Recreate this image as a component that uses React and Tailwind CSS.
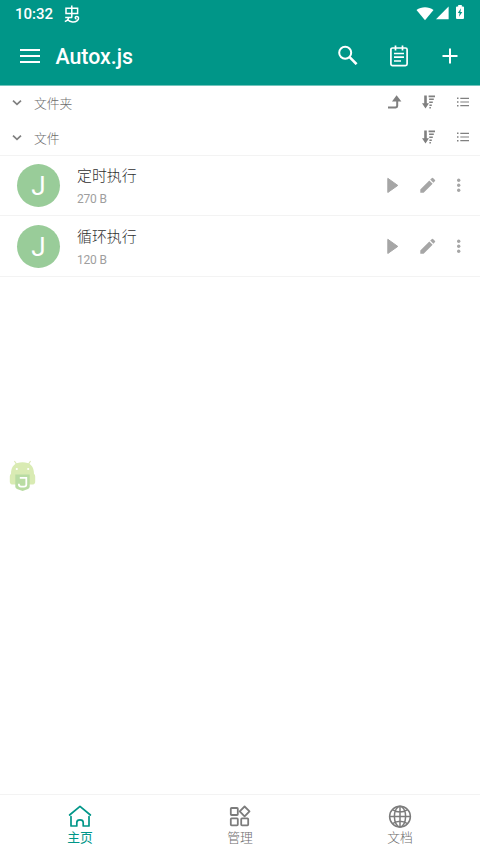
import React from "react";

const files = [
  { name: "定时执行", size: "270 B" },
  { name: "循环执行", size: "120 B" },
];

const StatusBar = () => (
  <div className="flex h-[27px] items-center pr-4 pl-[15px]">
    <span className="w-[38px] pt-0.5 text-[15px] leading-none font-medium">
      10:32
    </span>
    <svg
      className="ml-[11px]"
      width="16"
      height="18"
      viewBox="0 0 16 18"
      fill="none"
      stroke="currentColor"
      strokeWidth="1.5"
    >
      <path d="M7.8 0.5V12.4M2 3.2H13.6V8.4H2ZM1.2 12.4H8.2" />
      <path d="M4.6 12.4C4.4 14.4 3 16 0.8 16.4M3.6 14.8C6.4 17.4 10.6 17.6 13 15.8C15.6 13.8 14.6 11.4 12.8 11.4C10.8 11.4 10.6 13.8 12.6 14" />
    </svg>
    <svg
      className="ml-auto"
      width="18"
      height="14"
      viewBox="0 0 18 14"
      fill="currentColor"
    >
      <path d="M0.5 3C5.3-.8 12.7-.8 17.5 3L9 13.3Z" />
    </svg>
    <svg
      className="mb-px ml-0.5"
      width="13"
      height="14"
      viewBox="0 0 13 14"
      fill="currentColor"
    >
      <path d="M12.6 0.6V13.2H0Z" />
    </svg>
    <svg
      className="mb-[3px] ml-[7px]"
      width="8"
      height="14"
      viewBox="0 0 8 14"
      fill="currentColor"
    >
      <path d="M2.2 0H5.8V1.4H7A1 1 0 0 1 8 2.4V13A1 1 0 0 1 7 14H1A1 1 0 0 1 0 13V2.4A1 1 0 0 1 1 1.4H2.2Z" />
      <path d="M5 3.2L1.8 8H3.6L3 11.8L6.3 7H4.4Z" fill="#009688" />
    </svg>
  </div>
);

const Toolbar = () => (
  <div className="flex h-[58px] items-center pr-[22px] pl-5">
    <svg
      className="mb-px"
      width="20"
      height="16"
      viewBox="0 0 20 16"
      stroke="currentColor"
      strokeWidth="2"
    >
      <path d="M0 2H20M0 8H20M0 14H20" />
    </svg>
    <h1 className="ml-[15.5px] pt-0.5 text-[21.3px] leading-none font-medium">
      Autox.js
    </h1>
    <svg
      className="mr-8 mb-0.5 ml-auto"
      width="20"
      height="20"
      viewBox="0 0 20 20"
      fill="none"
      stroke="currentColor"
    >
      <circle cx="7.2" cy="7.8" r="6" strokeWidth="2" />
      <path d="M11.6 12.2L18.6 19.2" strokeWidth="2.6" />
    </svg>
    <svg
      className="mr-[34px] mb-px"
      width="18"
      height="22"
      viewBox="0 0 18 22"
      fill="none"
      stroke="currentColor"
      strokeWidth="1.7"
    >
      <rect x="0.9" y="3" width="16.2" height="17.6" rx="1.6" />
      <path d="M5.5 0.5V5.5M12.5 0.5V5.5M4 8.5H14M4 12.2H14M4 16H11" />
    </svg>
    <svg
      className="mb-px"
      width="16"
      height="16"
      viewBox="0 0 16 16"
      stroke="currentColor"
      strokeWidth="2"
    >
      <path d="M8 0.5V15.5M0.5 8H15.5" />
    </svg>
  </div>
);

const SortIcon = () => (
  <svg width="14" height="14" viewBox="0 0 14 14" fill="currentColor">
    <path d="M2.2 0.4H4.8V8.2H7L3.5 13.4L0 8.2H2.2Z" />
    <path d="M6.6 0.4H13V2.2H6.6ZM7.1 3.4H11.8V5.1H7.1ZM7.2 6.4H10.8V8.1H7.2ZM7.4 9.4H9.8V11H7.4ZM7.4 12.1H8.9V13.6H7.4Z" />
  </svg>
);

const ListIcon = () => (
  <svg width="12" height="10" viewBox="0 0 12 10" fill="currentColor">
    <path d="M0 0.5H1.5V2H0ZM0 4.3H1.5V5.8H0ZM0 8H1.5V9.5H0ZM3.3 0.7H12V1.9H3.3ZM3.3 4.4H12V5.6H3.3ZM3.3 8.1H12V9.3H3.3Z" />
  </svg>
);

const SectionHeader = ({ title, showUp }) => (
  <div className="flex h-[35px] items-center pr-[11px] pl-3 text-[#808080]">
    <svg
      width="10"
      height="6"
      viewBox="0 0 10 6"
      fill="none"
      stroke="currentColor"
      strokeWidth="1.7"
    >
      <path d="M1 0.6L5 4.4L9 0.6" />
    </svg>
    <span className="ml-3 pt-[3px] text-[12.8px] leading-none font-light text-[#6c6c6c]">
      {title}
    </span>
    <div className="ml-auto flex items-center pb-px">
      {showUp && (
        <svg
          className="mr-5"
          width="14"
          height="14"
          viewBox="0 0 14 14"
          fill="currentColor"
        >
          <path d="M8.6 0.2L13.4 6.4H10.2V11A2.4 2.4 0 0 1 7.8 13.4H0V11.6H7.2A1 1 0 0 0 8.2 10.6V6.4H4Z" />
        </svg>
      )}
      <SortIcon />
      <span className="w-[21px]" />
      <ListIcon />
    </div>
  </div>
);

const FileRow = ({ name, size }) => (
  <div className="flex h-[61px] items-center border-b border-[#f3f3f3] pr-[19px] pl-[17px]">
    <div className="flex h-[43px] w-[43px] items-center justify-center rounded-full bg-[#99cc99] pt-0.5 text-[26px] leading-none text-white">
      J
    </div>
    <div className="ml-[17px] pt-[3px]">
      <div className="text-[14.9px] leading-[22px] font-light text-[#303030]">
        {name}
      </div>
      <div className="mt-[3px] text-[12px] leading-[18px] tracking-[-0.2px] text-[#9e9e9e]">
        {size}
      </div>
    </div>
    <div className="ml-auto flex items-center text-[#a6a6a6]">
      <svg width="12" height="16" viewBox="0 0 12 16" fill="currentColor">
        <path
          d="M0.8 1.3L10.8 8.4L0.8 15.5Z"
          stroke="currentColor"
          strokeLinejoin="round"
        />
      </svg>
      <svg
        className="ml-[21px]"
        width="16"
        height="16"
        viewBox="0 0 16 16"
        fill="currentColor"
      >
        <path d="M0.3 12.4L9.3 3.4L12.6 6.7L3.6 15.7H0.3ZM10.2 2.6L12 0.9Q12.5 0.4 13 0.9L15 2.9Q15.5 3.4 15 3.9L13.4 5.7Z" />
      </svg>
      <svg
        className="ml-[21px]"
        width="4"
        height="14"
        viewBox="0 0 4 14"
        fill="currentColor"
      >
        <circle cx="1.7" cy="2.3" r="1.7" />
        <circle cx="1.7" cy="7.3" r="1.7" />
        <circle cx="1.7" cy="12.3" r="1.7" />
      </svg>
    </div>
  </div>
);

// Floating robot button that sits over the file list
const FloatingButton = () => (
  <svg
    className="absolute top-[460px] left-[9px]"
    width="27"
    height="32"
    viewBox="0 0 27 32"
  >
    <path
      d="M5.4 1L8 4.8M21.6 1L19 4.8"
      stroke="#dce9b8"
      strokeWidth="1.2"
    />
    <path
      d="M2 14C2 6 6 2.2 13.5 2.2C21 2.2 25 6 25 14Q26.2 14.4 26.2 16.4V21.6Q26.2 24.4 24 24.4H3Q0.8 24.4 0.8 21.6V16.4Q0.8 14.4 2 14Z"
      fill="#d9ebb3"
    />
    <path
      d="M6.3 14.6H20.7V26.5Q20.7 28.2 19 29L13.6 31L8 29Q6.3 28.2 6.3 26.5Z"
      fill="#b9dca3"
    />
    <circle cx="7.8" cy="9" r="1.1" fill="#fff" />
    <circle cx="19.2" cy="9" r="1.1" fill="#fff" />
    <path
      d="M10.8 17.8H17.3V24.6Q17.3 26.7 15 26.7H12Q9.8 26.7 9.8 23.8"
      fill="none"
      stroke="#fff"
      strokeWidth="1.8"
    />
  </svg>
);

const HomeIcon = () => (
  <svg
    width="24"
    height="24"
    viewBox="0 0 24 24"
    fill="none"
    stroke="currentColor"
    strokeWidth="1.7"
    strokeLinecap="round"
    strokeLinejoin="round"
  >
    <path d="M1.6 11L12 2.4L22.4 11M3 12.6V22H8.8V18.4Q8.8 15.8 12 15.8Q15.2 15.8 15.2 18.4V22H21V12.6" />
  </svg>
);

const ManageIcon = () => (
  <svg
    width="24"
    height="24"
    viewBox="0 0 24 24"
    fill="none"
    stroke="currentColor"
    strokeWidth="1.8"
    strokeLinejoin="round"
  >
    <rect x="2.8" y="4" width="7" height="7" rx="0.8" />
    <rect x="2.8" y="14.4" width="7" height="7" rx="0.8" />
    <rect x="13.2" y="14.4" width="7" height="7" rx="0.8" />
    <path d="M16.6 2.5L21.5 7.4L16.6 12.3L11.7 7.4Z" />
  </svg>
);

const DocsIcon = () => (
  <svg
    width="24"
    height="24"
    viewBox="0 0 24 24"
    fill="none"
    stroke="currentColor"
    strokeWidth="1.5"
  >
    <circle cx="12" cy="12.6" r="10.4" />
    <ellipse cx="12" cy="12.6" rx="5.6" ry="10.4" />
    <path d="M12 2.2V23M1.6 12.6H22.4M4.4 5.6Q12 10.4 19.6 5.6M4.4 19.6Q12 14.8 19.6 19.6" />
  </svg>
);

const tabs = [
  { label: "主页", icon: <HomeIcon />, active: true },
  { label: "管理", icon: <ManageIcon /> },
  { label: "文档", icon: <DocsIcon /> },
];

const App = () => {
  return (
    <div className="relative flex h-[855px] w-[480px] flex-col overflow-hidden bg-white font-['Roboto','Noto_Sans_CJK_SC',sans-serif]">
      <header className="h-[86px] shrink-0 border-b border-[#72c4bc] bg-[#009688] bg-clip-padding text-white">
        <StatusBar />
        <Toolbar />
      </header>

      <main className="-mt-px flex-1">
        <div className="border-b border-[#f3f3f3]">
          <SectionHeader title="文件夹" showUp />
          <SectionHeader title="文件" />
        </div>
        <div className="-mt-px">
          {files.map((file) => (
            <FileRow key={file.name} name={file.name} size={file.size} />
          ))}
        </div>
      </main>

      <FloatingButton />

      <nav className="grid h-[61px] shrink-0 grid-cols-3 border-t border-[#f3f3f3]">
        {tabs.map((tab) => (
          <div
            key={tab.label}
            className={`flex flex-col items-center pt-[9px] ${
              tab.active ? "text-[#009688]" : "text-[#7c7c7c]"
            }`}
          >
            {tab.icon}
            <span
              className={`mt-0.5 text-[12.8px] leading-[16px] ${
                tab.active ? "font-normal" : "font-light text-[#6c6c6c]"
              }`}
            >
              {tab.label}
            </span>
          </div>
        ))}
      </nav>
    </div>
  );
};

export default App;
